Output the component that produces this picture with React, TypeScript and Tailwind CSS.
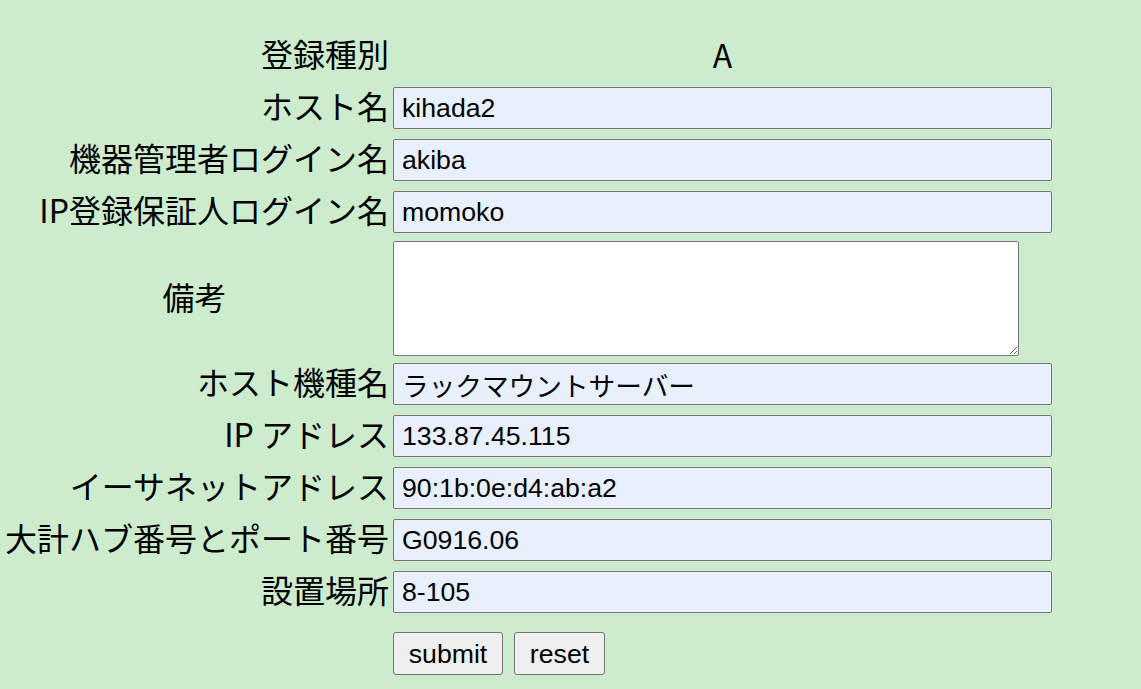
import React from 'react';

// 入力行のデータ
const FIELDS_TOP = [
   { label: 'ホスト名', value: 'kihada2' },
   { label: '機器管理者ログイン名', value: 'akiba' },
   { label: 'IP登録保証人ログイン名', value: 'momoko' },
];

const FIELDS_BOTTOM = [
   { label: 'ホスト機種名', value: 'ラックマウントサーバー' },
   { label: 'IP アドレス', value: '133.87.45.115' },
   { label: 'イーサネットアドレス', value: '90:1b:0e:d4:ab:a2' },
   { label: '大計ハブ番号とポート番号', value: 'G0916.06' },
   { label: '設置場所', value: '8-105' },
];

const labelFont = { fontFamily: '"Noto Sans CJK JP", "Noto Sans", sans-serif' };
const inputFont = { fontFamily: '"Liberation Sans", "Noto Sans CJK JP", sans-serif' };

function Label({ children, center }: { children: React.ReactNode; center?: boolean }) {
   return (
      <div
         className={`w-[389px] shrink-0 flex items-center pb-[6px] ${center ? 'justify-center' : 'justify-end'} text-[32px] leading-none text-black whitespace-nowrap`}
         style={labelFont}
      >
         {children}
      </div>
   );
}

function InputRow({ label, value }: { label: string; value: string }) {
   return (
      <div className="flex h-[42px] mt-[10px] gap-[4px]">
         <Label>{label}</Label>
         <input
            defaultValue={value}
            className="w-[659px] h-[42px] bg-[#e8f0fe] border border-[#767676] rounded-[2px] px-[8px] text-[26.67px] text-black outline-none"
            style={inputFont}
         />
      </div>
   );
}

export default function App() {
   return (
      <div className="min-h-screen bg-[#cdeccd] pt-[25px]">
         <form className="flex flex-col">
            {/* 登録種別 */}
            <div className="flex h-[42px] mt-[10px] gap-[4px]">
               <Label>登録種別</Label>
               <div
                  className="w-[659px] flex items-center justify-center pb-[4px] text-[32px] leading-none text-black"
                  style={labelFont}
               >
                  A
               </div>
            </div>

            {FIELDS_TOP.map((f) => (
               <InputRow key={f.label} label={f.label} value={f.value} />
            ))}

            {/* 備考 */}
            <div className="flex h-[115px] mt-[8px] gap-[4px]">
               <Label center>備考</Label>
               <textarea
                  className="w-[626px] h-[115px] bg-white border border-[#767676] rounded-[2px] outline-none"
               />
            </div>

            <div className="-mt-[3px]">
               {FIELDS_BOTTOM.map((f) => (
                  <InputRow key={f.label} label={f.label} value={f.value} />
               ))}
            </div>

            {/* ボタン */}
            <div className="flex mt-[19px] gap-[4px]">
               <div className="w-[389px] shrink-0" />
               <div className="flex gap-[11px]">
                  <button
                     type="button"
                     className="w-[110px] h-[43px] bg-[#efefef] border border-[#767676] rounded-[3px] text-[26.67px] text-black"
                     style={inputFont}
                  >
                     submit
                  </button>
                  <button
                     type="button"
                     className="w-[91px] h-[43px] bg-[#efefef] border border-[#767676] rounded-[3px] text-[26.67px] text-black"
                     style={inputFont}
                  >
                     reset
                  </button>
               </div>
            </div>
         </form>
      </div>
   );
}
